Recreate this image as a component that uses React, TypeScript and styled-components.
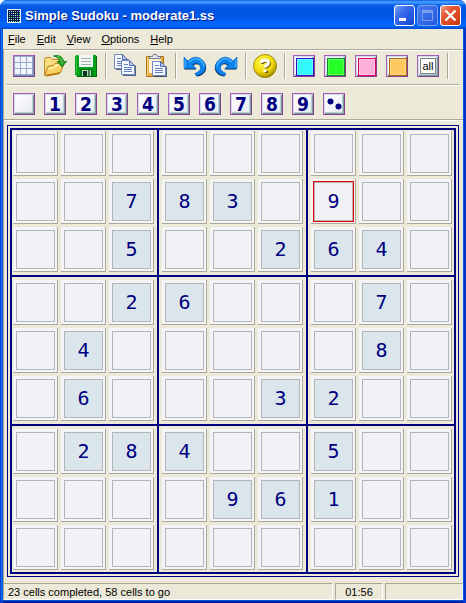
import React from "react";
import styled, { createGlobalStyle, css } from "styled-components";

const NAVY = "#000080";
const FACE = "#ece9d8";
const SHADE = "#aca899";
const UI_FONT = `"Liberation Sans", Arial, sans-serif`;

const GlobalStyle = createGlobalStyle`
  * { box-sizing: border-box; }
  body { margin: 0; background: #fff; }
  button { font: inherit; color: inherit; padding: 0; border: 0; background: none; }
`;

const Window = styled.div`
  display: flex;
  flex-direction: column;
  min-height: 100vh;
  border-radius: 7px 7px 0 0;
  overflow: hidden;
  background: #0a3fd6;
  font: 11px/14px ${UI_FONT};
  color: #000;
`;

const TitleBar = styled.header`
  display: flex;
  align-items: center;
  height: 29px;
  padding: 2px 5px 0 7px;
  background: linear-gradient(
    #0048d8 0, #3c94ff 1px, #3c94ff 3px, #0a60e8 5px, #0054e0 10px,
    #0058ea 18px, #0066fc 24px, #0066fc 26px, #0048cc 29px
  );
`;

const Title = styled.h1`
  flex: 1;
  margin: 0 0 0 4px;
  font: bold 13px/18px "Liberation Sans", Arial, sans-serif;
  color: #fff;
  text-shadow: 1px 1px 0 #0a1883;
  white-space: nowrap;
`;

const Caption = styled.button<{ $kind: "normal" | "dim" | "close" }>`
  display: block;
  width: 21px;
  height: 21px;
  margin-left: 2px;
  border: 1px solid ${(p) => (p.$kind === "dim" ? "#7d9ff0" : "#fff")};
  border-radius: 3px;
  background: ${(p) =>
    p.$kind === "close"
      ? "linear-gradient(135deg, #f0a088, #e25a32 35%, #d8441c 75%, #b83410)"
      : p.$kind === "dim"
        ? "linear-gradient(135deg, #4a7cf0, #2058e0)"
        : "linear-gradient(135deg, #7ba2f4, #3c6cec 35%, #2054e0 75%, #1840b8)"};
  svg { display: block; }
`;

const Frame = styled.div`
  display: flex;
  flex: 1;
  flex-direction: column;
  margin: 0 3px 3px;
  background: ${FACE};
  box-shadow: -1px 0 0 #0855dd, -2px 0 0 #1672f0, 1px 0 0 #0855dd, 2px 0 0 #0030c0, 0 1px 0 #0855dd, 0 3px 0 #001ea0;
`;

const MenuBar = styled.nav`
  display: flex;
  height: 20px;
  padding-left: 5px;
  gap: 11px;
  align-items: center;
`;

const MenuItem = styled.button`
  line-height: 16px;
  &::first-letter { text-decoration: underline; }
`;

const Tools = styled.div`
  border-top: 1px solid ${SHADE};
  border-left: 1px solid ${SHADE};
  box-shadow: inset 0 1px 0 #fff;
  padding: 1px 4px 0 3px;
`;

const ToolRow = styled.div<{ $second?: boolean }>`
  display: flex;
  height: 33px;
  padding: 4px 0 0 2px;
  ${(p) =>
    p.$second &&
    css`
      height: 35px;
      padding-top: 8px;
      border-top: 1px solid ${SHADE};
      box-shadow: inset 0 1px 0 #fff;
    `}
`;

const ToolButton = styled.button`
  flex: none;
  width: 22px;
  height: 22px;
  margin: 0 5px 0 4px;
  svg { display: block; overflow: visible; }
`;

const Separator = styled.span`
  flex: none;
  width: 2px;
  height: 26px;
  margin: -2px 3px 0;
  border-left: 1px solid ${SHADE};
  border-right: 1px solid #fff;
`;

const tile = css`
  border: 1px solid;
  border-color: #a45cb8 #84408c #84408c #a45cb8;
  background: linear-gradient(135deg, #ffffff, #f0f2f8 60%, #e0eaec);
  box-shadow: inset 1px 1px 0 #d4dce8, inset -1px -1px 0 #7c9ca0, inset -2px -2px 0 #b8d0d0;
`;

const NumberButton = styled(ToolButton)`
  ${tile}
  display: flex;
  align-items: center;
  justify-content: center;
  font: bold 19px/20px "DejaVu Sans Condensed", "DejaVu Sans", sans-serif;
  color: ${NAVY};
`;

const ColorButton = styled(ToolButton)<{ $fill: string; $edge: string }>`
  ${tile}
  padding: 2px;
  &::before {
    content: "";
    display: block;
    width: 16px;
    height: 16px;
    border: 1px solid ${(p) => p.$edge};
    background: ${(p) => p.$fill};
    box-shadow: inset 0 0 0 1px rgba(255, 255, 255, 0.25);
  }
`;

const AllButton = styled(ToolButton)`
  ${tile}
  padding: 2px;
  span {
    display: block;
    width: 16px;
    height: 16px;
    border: 1px solid #808080;
    background: #fff;
    font: 11px/14px ${UI_FONT};
    text-align: center;
  }
`;

const Content = styled.main`
  flex: 1;
  border-top: 1px solid ${SHADE};
  border-left: 1px solid ${SHADE};
  box-shadow: inset 0 1px 0 #fff;
  padding: 5px 4px 6px 3px;
`;

const Board = styled.div`
  aspect-ratio: 1;
  border: 1px solid ${NAVY};
  padding: 2px;
`;

const Blocks = styled.div`
  display: grid;
  height: 100%;
  grid-template: 145fr 147fr 146fr / 145fr 147fr 146fr;
  gap: 2px;
  border: 2px solid ${NAVY};
  background: ${NAVY};
`;

const Block = styled.div<{ $row: number; $col: number }>`
  display: grid;
  grid-template: repeat(3, minmax(0, 1fr)) / repeat(3, minmax(0, 1fr));
  gap: 3px;
  padding: ${(p) =>
    `${p.$row === 0 ? 1 : 3}px ${p.$col === 2 ? 2 : 3}px ${p.$row === 2 ? 2 : 3}px ${p.$col === 0 ? 1 : 3}px`};
  background: ${FACE};
`;

const Cell = styled.button<{ $given: boolean; $selected: boolean }>`
  display: flex;
  padding: 3px 2px 2px 3px;
  border: solid ${SHADE};
  border-width: 0 1px 1px 0;
  background: #f4f5f8;
  font: 20px/24px "DejaVu Sans Mono", "Liberation Mono", monospace;
  color: ${NAVY};
  span {
    display: flex;
    flex: 1;
    align-self: stretch;
    align-items: center;
    justify-content: center;
    padding-bottom: 2px;
    border: 1px solid #b4b4b4;
    background: ${(p) => (p.$given ? "#dbe6ec" : "#f0f2f6")};
    ${(p) => p.$selected && "box-shadow: 0 0 0 1px #e80000;"}
  }
`;

const StatusBar = styled.footer`
  display: flex;
  gap: 2px;
  height: 17px;
`;

const StatusPane = styled.div<{ $width?: number }>`
  flex: ${(p) => (p.$width ? `0 0 ${p.$width}px` : "1")};
  padding-left: 4px;
  border: 1px solid;
  border-color: ${SHADE} #fff #fff ${SHADE};
  line-height: 16px;
  white-space: nowrap;
  ${(p) => p.$width && "padding-left: 0; text-align: center;"}
`;

const AppIcon = () => (
  <svg width="14" height="14" viewBox="0 0 14 14" shapeRendering="crispEdges">
    <path fill="#e8f0f8" d="M0 0h14v14H0z" />
    <path fill="#101848" d="M1 1h12v12H1z" />
    {Array.from({ length: 36 }, (_, i) => {
      const x = i % 6;
      const y = Math.floor(i / 6);
      const colors = ["#70e8ff", "#58e858", "#d8f8ff", "#58a8e8", "#90f8a0"];
      return <rect key={i} x={2 + x * 2} y={2 + y * 2} width="1" height="1" fill={colors[(x * 2 + y * 3) % 5]} />;
    })}
  </svg>
);

const GridIcon = () => (
  <svg width="22" height="22" viewBox="0 0 22 22" shapeRendering="crispEdges">
    <path fill="#a45cb8" d="M0 0h22v22H0z" />
    <path fill="#84408c" d="M21 0h1v22H0v-1h21z" />
    <path fill="#98a8c8" d="M1 1h20v20H1z" />
    {[2, 8, 14].map((y) =>
      [2, 8, 14].map((x) => <rect key={`${x}-${y}`} x={x} y={y} width="5" height="5" fill="#f2f5fc" />)
    )}
    <path fill="#7890b0" d="M20 1h1v20H1v-1h19z" />
  </svg>
);

const OpenIcon = () => (
  <svg width="23" height="22" viewBox="0 0 23 22">
    <path fill="#f8dc80" stroke="#c08820" d="M.5 19V4.500l1-2h5l2 2h6.500v13z" />
    <path fill="#f8d060" stroke="#b87c18" d="M.5 20.500l3.500-9 5-1 2-2 9.500-1-4 10z" />
    <path fill="#fff0a8" d="M4.500 12.500l5-1 2-2 7-.7-1 2-6 1-2 2-5 1z" />
    <path fill="#b07818" d="M1 20h2l13-2.500v1.500L3 21.500z" />
    <path fill="#28a028" stroke="#107818" strokeWidth=".8" d="M9.500 1c6-1.500 9.500 1 10 5.500h3L18 12l-5-5.500h3c-.5-3-3-4.500-6.500-5.500z" />
    <path fill="none" stroke="#70d860" d="M13.500 1.500c3 .8 4 3 4.500 6v1" />
  </svg>
);

const SaveIcon = () => (
  <svg width="22" height="22" viewBox="0 0 22 22" shapeRendering="crispEdges">
    <path fill="#00a018" d="M1 0h20v1h1v21H2v-1H1v-1H0V1h1z" />
    <path fill="#006c10" d="M21 1h1v21H2v-1h19z" />
    <path fill="#30c840" d="M1 1h1v18H1zM2 0h2v1H2z" />
    <path fill="#f4f8f4" d="M4 0h14v12H4z" />
    <path fill="#a0b0a8" d="M6 3h10v1H6zM6 6h10v1H6zM6 9h10v1H6z" />
    <path fill="#007814" d="M5 14h13v7H5z" />
    <path fill="#b8d8c0" d="M7 15h9v6H7z" />
    <path fill="#083818" d="M8 16h4v5H8z" />
    <path fill="#48785c" d="M13 15h2v6h-2z" />
  </svg>
);

const Sheet = ({ x, y }: { x: number; y: number }) => (
  <g transform={`translate(${x} ${y})`}>
    <path fill="#203868" opacity=".75" d="M2 15h12V5l1 1v10H2z" />
    <path fill="#f6f9ff" stroke="#7088c0" d="M.5.500h8l5 5v9H.5z" />
    <path fill="#b8c8ec" stroke="#506cac" d="M8.500.500v5h5z" />
    <path stroke="#6080c0" d="M3 4.500h4M3 7.500h8M3 9.500h8M3 11.500h8" />
  </g>
);

const CopyIcon = () => (
  <svg width="22" height="22" viewBox="0 0 22 22">
    <Sheet x={0} y={-1} />
    <Sheet x={7} y={5} />
  </svg>
);

const PasteIcon = () => (
  <svg width="22" height="22" viewBox="0 0 22 22">
    <path fill="#e8ac40" stroke="#a87010" d="M1.500 1.500h17v20h-17z" />
    <path fill="#fff4d8" d="M4 4h12v14H4z" />
    <path fill="#ffd880" d="M2 2h1v19H2z" />
    <path fill="#e8ecf4" stroke="#707888" d="M4.500 3.500v-2h3l1-2h3l1 2h3v2z" />
    <Sheet x={7} y={6} />
  </svg>
);

const ARROW = "M0 2l4 4c4-4.500 9-4.800 13-2 3.500 2.500 5 6 4.500 9-.8 4-4 7-9.500 7.500l-1-2c3-1.500 5.500-3 5.500-5.500 0-5-4.500-6-8-3.500L12 13.500H0z";

const UndoShape = () => (
  <>
    <path fill="#082850" transform="translate(.6 1)" d={ARROW} />
    <path fill="#0c84f0" stroke="#0860c0" strokeWidth=".6" d={ARROW} />
    <path fill="none" stroke="#50b4ff" strokeWidth="1.200" d="M1.200 4.500v8M5 7c4-4 8-4 11-1.900 2.500 1.900 3.800 4 3.600 6.400" />
  </>
);

const UndoIcon = () => (
  <svg width="22" height="22" viewBox="0 0 22 22"><UndoShape /></svg>
);

const RedoIcon = () => (
  <svg width="22" height="22" viewBox="0 0 22 22">
    <g transform="translate(22 0) scale(-1 1)"><UndoShape /></g>
  </svg>
);

const HelpIcon = () => (
  <svg width="24" height="24" viewBox="0 0 24 24">
    <defs>
      <radialGradient id="ball" cx=".4" cy=".32" r=".7">
        <stop offset="0" stopColor="#fff860" />
        <stop offset=".6" stopColor="#f4dc08" />
        <stop offset="1" stopColor="#a88c00" />
      </radialGradient>
    </defs>
    <circle cx="11" cy="11" r="11.500" fill="url(#ball)" stroke="#907800" strokeWidth=".8" />
    <path fill="none" stroke="#7c6800" strokeWidth="3" d="M8.500 9c0-4 7-3.500 7-.2 0 2.500-3.500 2.200-3.500 4.700M12.500 15.500v2.500" />
    <path fill="none" stroke="#fff" strokeWidth="3" d="M7.500 8c0-4 7-3.500 7-.2 0 2.500-3.500 2.200-3.500 4.700M11 14.500v2.500" />
  </svg>
);

const DotsIcon = () => (
  <svg width="20" height="20" viewBox="0 0 20 20">
    <circle cx="6.500" cy="7.500" r="3" fill={NAVY} />
    <circle cx="14.500" cy="12.500" r="3" fill={NAVY} />
  </svg>
);

const PUZZLE = [
  ".........",
  "..783.9..",
  "..5..264.",
  "..26...7.",
  ".4.....8.",
  ".6...32..",
  ".284..5..",
  "....961..",
  ".........",
];

const COLORS = [
  { name: "Cyan", fill: "#33f8ff", edge: "#3010c8" },
  { name: "Green", fill: "#28ff28", edge: "#108828" },
  { name: "Pink", fill: "#ffb0d8", edge: "#dc0060" },
  { name: "Orange", fill: "#ffc860", edge: "#a86c18" },
];

const THIRDS = [0, 1, 2];

export default function App() {
  const [selected, setSelected] = React.useState("1-6");

  return (
    <>
      <GlobalStyle />
      <Window>
        <TitleBar>
          <AppIcon />
          <Title>Simple Sudoku - moderate1.ss</Title>
          <Caption $kind="normal" aria-label="Minimize">
            <svg width="19" height="19"><path fill="#fff" d="M4 12h7v3H4z" /></svg>
          </Caption>
          <Caption $kind="dim" aria-label="Maximize" disabled>
            <svg width="19" height="19">
              <path fill="none" stroke="#7d9ff0" d="M4.500 5.500h10v9h-10z" />
              <path fill="#7d9ff0" d="M4 4h11v3H4z" />
            </svg>
          </Caption>
          <Caption $kind="close" aria-label="Close">
            <svg width="19" height="19">
              <path stroke="#fff" strokeWidth="2.400" d="M4.500 4.500l10 10M14.500 4.500l-10 10" />
            </svg>
          </Caption>
        </TitleBar>
        <Frame>
          <MenuBar>
            {["File", "Edit", "View", "Options", "Help"].map((m) => (
              <MenuItem key={m}>{m}</MenuItem>
            ))}
          </MenuBar>
          <Tools>
            <ToolRow>
              <ToolButton aria-label="New"><GridIcon /></ToolButton>
              <ToolButton aria-label="Open"><OpenIcon /></ToolButton>
              <ToolButton aria-label="Save"><SaveIcon /></ToolButton>
              <Separator />
              <ToolButton aria-label="Copy"><CopyIcon /></ToolButton>
              <ToolButton aria-label="Paste"><PasteIcon /></ToolButton>
              <Separator />
              <ToolButton aria-label="Undo"><UndoIcon /></ToolButton>
              <ToolButton aria-label="Redo"><RedoIcon /></ToolButton>
              <Separator />
              <ToolButton aria-label="Help"><HelpIcon /></ToolButton>
              <Separator />
              {COLORS.map((c) => (
                <ColorButton key={c.name} aria-label={c.name} $fill={c.fill} $edge={c.edge} />
              ))}
              <AllButton><span>all</span></AllButton>
              <Separator />
            </ToolRow>
            <ToolRow $second>
              <NumberButton aria-label="No filter" />
              {[1, 2, 3, 4, 5, 6, 7, 8, 9].map((n) => (
                <NumberButton key={n}>{n}</NumberButton>
              ))}
              <NumberButton aria-label="Pairs"><DotsIcon /></NumberButton>
            </ToolRow>
          </Tools>
          <Content>
            <Board>
              <Blocks>
                {THIRDS.map((br) =>
                  THIRDS.map((bc) => (
                    <Block key={`${br}-${bc}`} $row={br} $col={bc}>
                      {THIRDS.map((r) =>
                        THIRDS.map((c) => {
                          const row = br * 3 + r;
                          const col = bc * 3 + c;
                          const id = `${row}-${col}`;
                          const value = PUZZLE[row][col].replace(".", "");
                          return (
                            <Cell
                              key={id}
                              aria-label={`Row ${row + 1}, column ${col + 1} ${value}`}
                              $given={value !== "" && id !== selected}
                              $selected={id === selected}
                              onClick={() => setSelected(id)}
                            >
                              <span>{value}</span>
                            </Cell>
                          );
                        })
                      )}
                    </Block>
                  ))
                )}
              </Blocks>
            </Board>
          </Content>
          <StatusBar>
            <StatusPane>23 cells completed, 58 cells to go</StatusPane>
            <StatusPane $width={48}>01:56</StatusPane>
            <StatusPane $width={78} />
          </StatusBar>
        </Frame>
      </Window>
    </>
  );
}
